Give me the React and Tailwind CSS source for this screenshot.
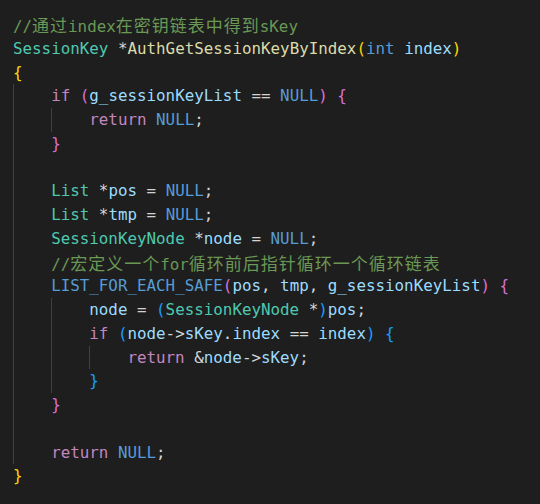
const C = {
  cm: 'text-[#6a9955]',
  ty: 'text-[#4ec9b0]',
  fn: 'text-[#dcdcaa]',
  kw: 'text-[#569cd6]',
  ctl: 'text-[#c586c0]',
  v: 'text-[#9cdcfe]',
  op: 'text-[#d4d4d4]',
  b1: 'text-[#ffd700]',
  b2: 'text-[#da70d6]',
  b3: 'text-[#179fff]',
}

// [indent guides (true = draw guide), tokens]
const lines = [
  [[], [['//通过index在密钥链表中得到sKey', 'cm']]],
  [[], [['SessionKey', 'ty'], [' *', 'op'], ['AuthGetSessionKeyByIndex', 'fn'], ['(', 'b1'], ['int', 'kw'], [' '], ['index', 'v'], [')', 'b1']]],
  [[], [['{', 'b1']]],
  [[true], [['if', 'ctl'], [' '], ['(', 'b2'], ['g_sessionKeyList', 'v'], [' == '], ['NULL', 'kw'], [')', 'b2'], [' '], ['{', 'b2']]],
  [[true, true], [['return', 'ctl'], [' '], ['NULL', 'kw'], [';']]],
  [[true], [['}', 'b2']]],
  [[true], []],
  [[true], [['List', 'ty'], [' *'], ['pos', 'v'], [' = '], ['NULL', 'kw'], [';']]],
  [[true], [['List', 'ty'], [' *'], ['tmp', 'v'], [' = '], ['NULL', 'kw'], [';']]],
  [[true], [['SessionKeyNode', 'ty'], [' *'], ['node', 'v'], [' = '], ['NULL', 'kw'], [';']]],
  [[true], [['//宏定义一个for循环前后指针循环一个循环链表', 'cm']]],
  [[true], [['LIST_FOR_EACH_SAFE', 'kw'], ['(', 'b2'], ['pos', 'v'], [', '], ['tmp', 'v'], [', '], ['g_sessionKeyList', 'v'], [')', 'b2'], [' '], ['{', 'b2']]],
  [[true, true], [['node', 'v'], [' = '], ['(', 'b3'], ['SessionKeyNode', 'ty'], [' *'], [')', 'b3'], ['pos', 'v'], [';']]],
  [[true, true], [['if', 'ctl'], [' '], ['(', 'b3'], ['node', 'v'], ['->'], ['sKey', 'v'], ['.'], ['index', 'v'], [' == '], ['index', 'v'], [')', 'b3'], [' '], ['{', 'b3']]],
  [[true, true, true], [['return', 'ctl'], [' &'], ['node', 'v'], ['->'], ['sKey', 'v'], [';']]],
  [[true, true], [['}', 'b3']]],
  [[true], [['}', 'b2']]],
  [[true], []],
  [[true], [['return', 'ctl'], [' '], ['NULL', 'kw'], [';']]],
  [[], [['}', 'b1']]],
]

function Text({ text }) {
  const parts = text.split(/([\u4e00-\u9fff]+)/)
  return parts.map((p, i) =>
    /[\u4e00-\u9fff]/.test(p) ? (
      <span key={i} className="font-['Noto_Sans_CJK_SC',sans-serif] text-[17px] tracking-[1px]">{p}</span>
    ) : (
      p
    )
  )
}

export default function App() {
  return (
    <div className="min-h-screen w-full bg-[#1e1e1e] pt-[13px] pl-[13px] font-['DejaVu_Sans_Mono','Noto_Sans_CJK_SC',monospace] text-[15.85px] leading-[23.75px] text-[#d4d4d4]">
      <div className="flex flex-col">
        {lines.map(([guides, tokens], li) => {
          // indentation depth: line with guides has that many indents, except blank lines
          const depth = tokens.length ? guides.length : 1
          const indents = []
          for (let d = 0; d < depth; d++) {
            indents.push(
              <span key={'i' + d} className="inline-block h-[23.75px] w-[4ch] border-l border-[#404040] align-top" />
            )
          }
          return (
            <div key={li} className="h-[23.75px] whitespace-pre">
              {indents}
              {tokens.map(([t, c], ti) => (
                <span key={ti} className={C[c || 'op']}>
                  <Text text={t} />
                </span>
              ))}
            </div>
          )
        })}
      </div>
    </div>
  )
}
